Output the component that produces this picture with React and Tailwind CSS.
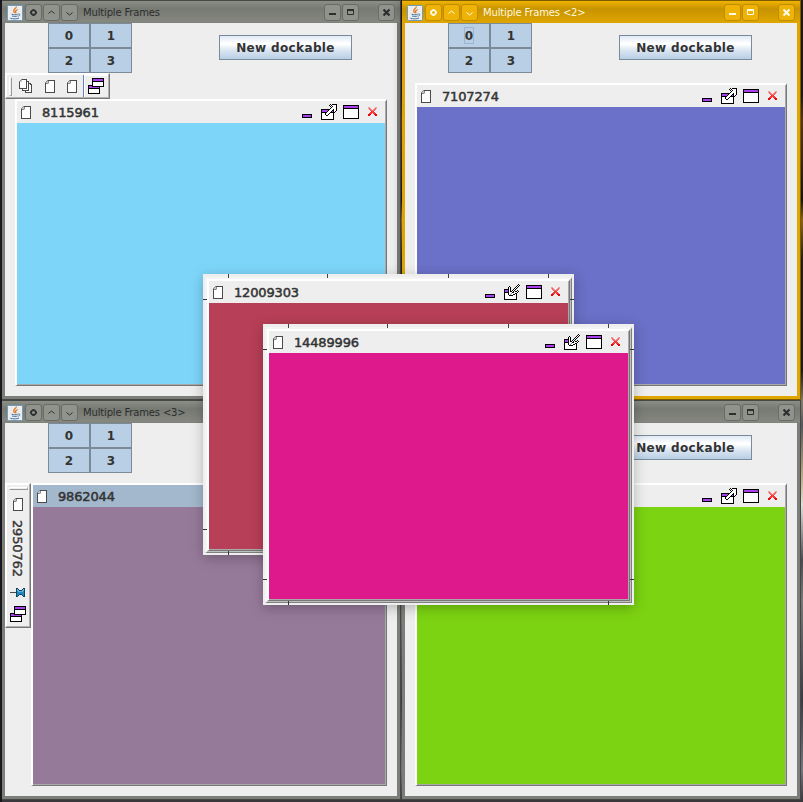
import React from "react";

const PALETTE = {
  K: "#000000",
  P: "#aa3fee",
  W: "#ffffff",
  G: "#4a4a4a",
  L: "#c4c4c4",
  M: "#8a8a8a",
  a: "#f06868",
  b: "#f03c3c",
  c: "#e80808",
  d: "#f2a0a0",
  f: "#ee9c9c",
  T: "#0d4468",
  U: "#2389bd",
  V: "#62b5d9",
};

function PixelIcon({ rows, className = "" }) {
  return (
    <svg
      width={rows[0].length}
      height={rows.length}
      shapeRendering="crispEdges"
      className={`block shrink-0 ${className}`}
    >
      {rows.flatMap((row, y) =>
        [...row].map((c, x) =>
          c === "." ? null : (
            <rect key={`${x}-${y}`} x={x} y={y} width="1" height="1" fill={PALETTE[c]} />
          )
        )
      )}
    </svg>
  );
}

const DOC = [
  "..MGGGGGGG",
  ".MLMWWWWWG",
  "MLLMWWWWWG",
  "GMMLWWWWWG",
  "GWWWWWWWWG",
  "GWWWWWWWWG",
  "GWWWWWWWWG",
  "GWWWWWWWWG",
  "GWWWWWWWWG",
  "GWWWWWWWWG",
  "GWWWWWWWWG",
  "GWWWWWWWWG",
  "GGGGGGGGGG",
];

const STACK = [
  "..MGGGGG......",
  ".MLWWWWG......",
  "MLLWWWWGGG....",
  "GWWWWWWGWG....",
  "GWWWWWWGWGGG..",
  "GWWWWWWGWGWGG.",
  "GWWWWWWGWGWWG.",
  "GWWWWWWGWGWWG.",
  "GWWWWWWGWGWWG.",
  "GGGGGGGGWGWWG.",
  "...GWWWWWGWWG.",
  "...GGGGGGGWWG.",
  "......GWWWWWG.",
  "......GGGGGGG.",
];

const MINIMIZE = [
  ...Array(10).fill("................"),
  "...KKKKKKKKKK...",
  "...KPPPPPPPPK...",
  "...KPPPPPPPPK...",
  "...KKKKKKKKKK...",
  ...Array(2).fill("................"),
];

const EXTERNALIZE = [
  ".........K.KKKKK",
  "........KWKWWWWK",
  ".........KWKWWWK",
  "..........KWWWWK",
  ".........KWWWWWK",
  "KKKKKKKKKWWWKWWK",
  "KPPPPPPKWWWKKWWK",
  "KPPPPPKWWWKPKWK.",
  "KKKKKKWWWKKKKK..",
  "KWWWKWWWKWWWK...",
  "KWWWKWWKWWWWK...",
  "KWWWWKKWWWWWK...",
  "KWWWWWWWWWWWK...",
  "KWWWWWWWWWWWK...",
  "KWWWWWWWWWWWK...",
  "KKKKKKKKKKKKK...",
];

const INTERNALIZE = [
  "..............K.",
  ".............KWK",
  ".....K......KWK.",
  "....KWK....KWK..",
  "....KWK...KWK...",
  "KKKKKWK..KWK....",
  "KPPPKWK.KWK..K..",
  "KPPPKWKKWK.KKWK.",
  "KKKKKWWWKKWWWK..",
  "KWWWKWWMWWWKK...",
  "KWWWKWMWWKKWK...",
  "KWWWWKKKKWWWK...",
  "KWWWWWWWWWWWK...",
  "KWWWWWWWWWWWK...",
  "KWWWWWWWWWWWK...",
  "KKKKKKKKKKKKK...",
];

const MAXIMIZE = [
  "................",
  "KKKKKKKKKKKKKKKK",
  "KPPPPPPPPPPPPPPK",
  "KPPPPPPPPPPPPPPK",
  "KKKKKKKKKKKKKKKK",
  ...Array(9).fill("KWWWWWWWWWWWWWWK"),
  "KKKKKKKKKKKKKKKK",
  "................",
];

const CLOSE = [
  "................",
  "................",
  "................",
  "...dd.....dd....",
  "...fad...daf....",
  "....aad.daa.....",
  ".....aaaaa......",
  "......bbb.......",
  ".....bbbbb......",
  "....bbb.bbb.....",
  "...ccc...ccc....",
  "...cc.....cc....",
  "................",
  "................",
  "................",
  "................",
];

const NORMALIZE = [
  "....KKKKKKKKKKKK",
  "....KPPPPPPPPPPK",
  "....KPPPPPPPPPPK",
  "....KKKKKKKKKKKK",
  "....KWWWWWWWWWWK",
  "....KWWWWWWWWWWK",
  "....KWWWWWWWWWWK",
  "KKKKKWWWWWWWWWWK",
  "KPPPKKKKKKKKKKKK",
  "KPPPPPPPPPPK....",
  "KKKKKKKKKKKK....",
  "KWWWWWWWWWWK....",
  "KWWWWWWWWWWK....",
  "KWWWWWWWWWWK....",
  "KWWWWWWWWWWK....",
  "KKKKKKKKKKKK....",
];

const PIN = [
  "......TT.....TT",
  "......TVT...TVT",
  "......TVVTTTVVT",
  "......TUVVVVVUT",
  "GGGGGGTUUUUUUUT",
  "......TUUUUUUUT",
  "......TUUTTTUUT",
  "......TUT...TUT",
  "......TT.....TT",
];

function JavaIcon() {
  return (
    <svg viewBox="0 0 16 16" className="block h-4 w-4 shrink-0">
      <rect x=".5" y=".5" width="15" height="15" rx="1" fill="#e9eef2" stroke="#7599b8" />
      <path d="M9.200 1.500c.5 2-3 2.600-2.500 4.600.2.800.8 1 .8 2M10.800 4.500C8.800 5.200 8.300 6 8.800 7c.3.600 0 .9-.4 1.200" fill="none" stroke="#e8761a" strokeWidth="1.300" />
      <path d="M4.500 9.200c2 .7 4.500.7 6.300 0M5 11c1.700.600 4 .600 5.500 0M3.300 13.200c2.500 1 6.500.9 8.700-.2M11.300 9c2-.5 2.300 1.500-.2 2.200" fill="none" stroke="#4d7596" strokeWidth="1" />
    </svg>
  );
}

function TitleButton({ active, kind }) {
  const color = active ? "#fffbe8" : "#2b302f";
  return (
    <div
      className={`flex h-[17px] w-[17px] shrink-0 items-center justify-center rounded-[3px] border ${
        active ? "border-[#c08c00] bg-[#efb207]" : "border-[#696b66] bg-[#90928c]"
      }`}
    >
      <svg width="15" height="15" fill="none" stroke={color} className="block shrink-0">
        {kind === "dot" && (
          <g>
            <circle cx="7.500" cy="7.500" r="2.300" strokeWidth="1.600" />
            <path d="M7.500 4v1.500M7.500 9.500V11M4 7.500h1.500M9.500 7.500H11" strokeWidth="1.800" />
          </g>
        )}
        {kind === "up" && <path d="M4.500 8.500l3-2.500 3 2.500" />}
        {kind === "down" && <path d="M4.500 7.500l3 2.500 3-2.500" />}
        {kind === "min" && <path d="M4 9h7" strokeWidth="2" />}
        {kind === "max" && (
          <g>
            <path d="M4.500 4.500h6v5h-6z" />
            <path d="M4 5h7" strokeWidth="2" />
          </g>
        )}
        {kind === "close" && <path d="M4.500 4.500l6 6M10.500 4.500l-6 6" strokeWidth="2.200" />}
      </svg>
    </div>
  );
}

function TitleBar({ title, active }) {
  return (
    <div className="flex h-[22px] shrink-0 items-center px-[2px] pt-px">
      <JavaIcon />
      <div className="ml-[2px] flex gap-px">
        <TitleButton kind="dot" active={active} />
        <TitleButton kind="up" active={active} />
        <TitleButton kind="down" active={active} />
      </div>
      <span
        className={`ml-[5px] whitespace-pre pt-px font-['DejaVu_Sans'] text-[10px] leading-[18px] tracking-[-0.16px] ${
          active ? "text-[#fff8df]" : "text-[#2b2e2c]"
        }`}
      >
        {title}
      </span>
      <div className="ml-auto flex">
        <TitleButton kind="min" active={active} />
        <div className="ml-px" />
        <TitleButton kind="max" active={active} />
        <div className="ml-[19px]" />
        <TitleButton kind="close" active={active} />
      </div>
    </div>
  );
}

function Controls({ focused }) {
  return (
    <div className="flex h-[50px] shrink-0 pl-[43px]">
      <div className="grid h-[50px] w-[84px] grid-cols-2 grid-rows-2 font-['DejaVu_Sans'] text-[12px] font-bold text-[#333]">
        {["0", "1", "2", "3"].map((n) => (
          <div key={n} className="flex items-center justify-center border border-[#7a8a99] bg-[#b8cfe5]">
            <span
              className={`flex h-[17px] w-[10px] items-center justify-center border ${
                focused && n === "0" ? "border-[#9fb5cf]" : "border-transparent"
              }`}
            >
              {n}
            </span>
          </div>
        ))}
      </div>
      <div className="ml-[87px] mt-3 flex h-[25px] w-[133px] items-center justify-center border border-[#7a8a99] bg-[linear-gradient(#dfe9f4_0%,#ffffff_32%,#ffffff_36%,#dce7f2_60%,#b8cfe5_100%)] font-['DejaVu_Sans'] text-[12px] font-bold text-[#333]">
        <span className="whitespace-pre tracking-[0.36px]">New dockable</span>
      </div>
    </div>
  );
}

function Dockable({ title, color, floating, selected }) {
  return (
    <div className="flex min-h-0 flex-1 flex-col border-b border-l-2 border-r border-t-2 border-b-[#777] border-l-white border-r-[#777] border-t-white">
      <div className="flex min-h-0 flex-1 flex-col border-b border-r border-[#aaa]">
        <div className={`flex h-[22px] shrink-0 items-center pl-1 pr-1 ${selected ? "bg-[#a3b8cc]" : "bg-[#eee]"}`}>
          <PixelIcon rows={DOC} className="mt-px" />
          <span className="ml-[11px] mt-px font-['DejaVu_Sans'] text-[13px] leading-[21px] tracking-[-0.15px] text-[#333] [-webkit-text-stroke:0.5px_#333]">
            {title}
          </span>
          <div className="ml-auto flex gap-1.5">
            <PixelIcon rows={MINIMIZE} />
            <PixelIcon rows={floating ? INTERNALIZE : EXTERNALIZE} />
            <PixelIcon rows={MAXIMIZE} />
            <PixelIcon rows={CLOSE} />
          </div>
        </div>
        <div className={`flex-1 ${color}`} />
      </div>
    </div>
  );
}

function Frame({ title, active, place, children }) {
  return (
    <div
      className={`absolute flex h-[400px] w-[399px] flex-col border-b border-r border-t px-[3px] pb-[3px] ${place} ${
        active
          ? "border-[#7d5b00] bg-[linear-gradient(#f0b300_0px,#c79300_8px,#dea500_21px,#e0a500_22px)] shadow-[0_0_10px_rgba(0,0,0,0.3)]"
          : "border-[#464846] bg-[linear-gradient(#8b8d87_0px,#777973_8px,#858780_21px,#7c7f79_22px)]"
      }`}
    >
      <TitleBar title={title} active={active} />
      <div className="flex min-h-0 flex-1 flex-col bg-[#eee]">{children}</div>
    </div>
  );
}

const TOP_TICKS = ["left-[25px]", "left-[124px]", "left-[245px]", "left-[345px]"];

function FloatingWindow({ place, title, color }) {
  return (
    <div className={`absolute flex h-[281px] w-[371px] flex-col bg-[#eee] px-[2px] pb-[2px] pt-[3px] shadow-[0_3px_12px_rgba(0,0,0,0.25)] ${place}`}>
      <div className="flex min-h-0 flex-1 flex-col border-b border-l-2 border-r border-t-2 border-b-[#808080] border-l-[#f4f4f4] border-r-[#808080] border-t-[#f4f4f4]">
        <div className="flex min-h-0 flex-1 flex-col border-b border-r border-[#c0c0c0]">
          <Dockable title={title} color={color} floating />
        </div>
      </div>
      {TOP_TICKS.map((t) => (
        <i key={t} className={`absolute top-0 h-[4px] w-px bg-[#444] ${t}`} />
      ))}
      <i className="absolute bottom-0 left-[25px] h-[4px] w-px bg-[#333]" />
      <i className="absolute bottom-0 left-[345px] h-[4px] w-px bg-[#333]" />
      <i className="absolute left-0 top-[25px] h-px w-[4px] bg-[#333]" />
      <i className="absolute left-0 top-[255px] h-px w-[4px] bg-[#333]" />
      <i className="absolute right-0 top-[25px] h-px w-[4px] bg-[#333]" />
      <i className="absolute right-0 top-[255px] h-px w-[4px] bg-[#333]" />
    </div>
  );
}

function HorizontalToolbar() {
  return (
    <div className="flex h-[26px] w-[105px] shrink-0 items-start border border-b-[#777] border-l-white border-r-[#777] border-t-white shadow-[inset_-1px_-1px_0_#b0b0b0,inset_1px_1px_0_#fff]">
      <div className="ml-[3px] mt-[3px] h-[19px] w-[3px] border border-b-[#aaa] border-l-white border-r-[#999] border-t-white" />
      <PixelIcon rows={STACK} className="ml-[7px] mt-[5px]" />
      <PixelIcon rows={DOC} className="ml-[12px] mt-[6px]" />
      <PixelIcon rows={DOC} className="ml-[12px] mt-[6px]" />
      <div className="ml-[6px] mt-px flex h-[22px] w-[25px] items-start border-l border-[#6382bf] bg-[#eee] pl-[4px] pt-[3px] shadow-[inset_1px_1px_0_#fff]">
        <PixelIcon rows={NORMALIZE} />
      </div>
    </div>
  );
}

function VerticalToolbar() {
  return (
    <div className="flex h-[145px] w-[26px] shrink-0 flex-col items-start border border-b-[#777] border-l-white border-r-[#777] border-t-white shadow-[inset_-1px_-1px_0_#b0b0b0,inset_1px_1px_0_#fff]">
      <div className="ml-[3px] mt-[3px] h-[3px] w-[19px] border border-b-[#999] border-l-white border-r-[#aaa] border-t-white" />
      <PixelIcon rows={DOC} className="ml-[7px] mt-[8px]" />
      <span className="ml-[4px] mt-[9px] h-[58px] w-[14px] font-['DejaVu_Sans'] text-[13px] leading-[14px] tracking-[-0.15px] text-[#333] [-webkit-text-stroke:0.4px_#333] [writing-mode:vertical-rl]">
        2950762
      </span>
      <PixelIcon rows={PIN} className="ml-[4px] mt-[10px]" />
      <PixelIcon rows={NORMALIZE} className="ml-[4px] mt-[9px]" />
    </div>
  );
}

export default function App() {
  return (
    <div className="relative h-[802px] w-[803px] overflow-hidden bg-[linear-gradient(#251a20_0px,#241c20_95px,#6b3c20_120px,#4a2b20_160px,#1c1615_200px,#a2711d_220px,#2c2220_260px,#241c20_370px,#8b8172_400px,#54565b_425px,#9a8d74_460px,#c6b997_485px,#e0e0dd_505px,#494b4e_560px,#777_600px,#393b40_700px,#74747b_770px,#39363a_802px)]">
      <div className="absolute left-0 top-0 h-full w-[2px] bg-[#17181e]" />

      <Frame title="Multiple Frames" place="left-[2px] top-0">
        <Controls />
        <HorizontalToolbar />
        <div className="flex min-h-0 flex-1 px-[10px] pb-[10px]">
          <Dockable title="8115961" color="bg-[#7dd6fa]" />
        </div>
      </Frame>
      <Frame title="Multiple Frames <2>" active place="left-[402px] top-0">
        <Controls focused />
        <div className="flex min-h-0 flex-1 px-[10px] pb-[10px] pt-[10px]">
          <Dockable title="7107274" color="bg-[#6b70c8]" />
        </div>
      </Frame>
      <Frame title="Multiple Frames <3>" place="left-[2px] top-[400px]">
        <Controls />
        <div className="flex min-h-0 flex-1 pb-[10px] pr-[10px] pt-[10px]">
          <VerticalToolbar />
          <Dockable title="9862044" color="bg-[#967a9a]" selected />
        </div>
      </Frame>
      <Frame title="Multiple Frames <4>" place="left-[402px] top-[400px]">
        <Controls />
        <div className="flex min-h-0 flex-1 px-[10px] pb-[10px] pt-[10px]">
          <Dockable title="8180753" color="bg-[#7cd311]" />
        </div>
      </Frame>

      <FloatingWindow place="left-[203px] top-[274px]" title="12009303" color="bg-[#b73f57]" />
      <FloatingWindow place="left-[263px] top-[324px]" title="14489996" color="bg-[#dd198c]" />
    </div>
  );
}
